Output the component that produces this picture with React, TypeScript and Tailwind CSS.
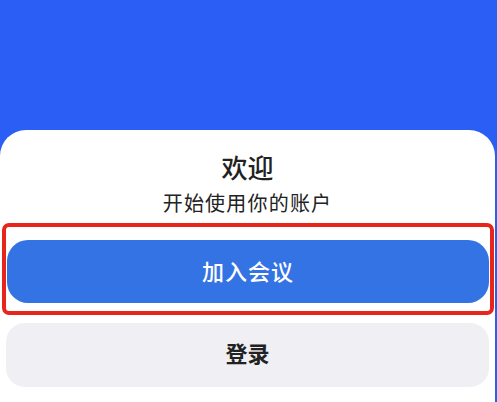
import React from "react";

const App = () => {
  return (
    <div
      className="w-[497px] h-[402px] bg-[#2b5ef4] overflow-hidden flex flex-col"
      style={{ fontFamily: '"Noto Sans CJK SC", "Noto Sans", sans-serif' }}
    >
      <div className="h-[130px] shrink-0" />
      <div className="flex-1 w-[495px] bg-white rounded-t-[26px] flex flex-col items-center">
        <h1 className="mt-[19px] text-[26px] leading-[36px] font-medium text-[#222]">欢迎</h1>
        <h2 className="mt-[4px] text-[20px] leading-[28px] text-[#222] tracking-[1.2px]">
          开始使用你的账户
        </h2>
        <div className="mt-[6px] ml-[2px] w-[492px] self-start border-[4px] border-[#e8251b] rounded-[7px] px-[1px] pt-[13px] pb-[8px]">
          <button className="w-full h-[63px] rounded-[21px] bg-[#3473e3] text-white text-[22px] font-medium tracking-[1px] pb-[2px]">
            加入会议
          </button>
        </div>
        <button className="mt-[8px] ml-[6px] self-start w-[483px] h-[64px] rounded-[19px] bg-[#efeff4] text-[#222] text-[22px] font-semibold pb-[6px]">
          登录
        </button>
      </div>
    </div>
  );
};

export default App;
